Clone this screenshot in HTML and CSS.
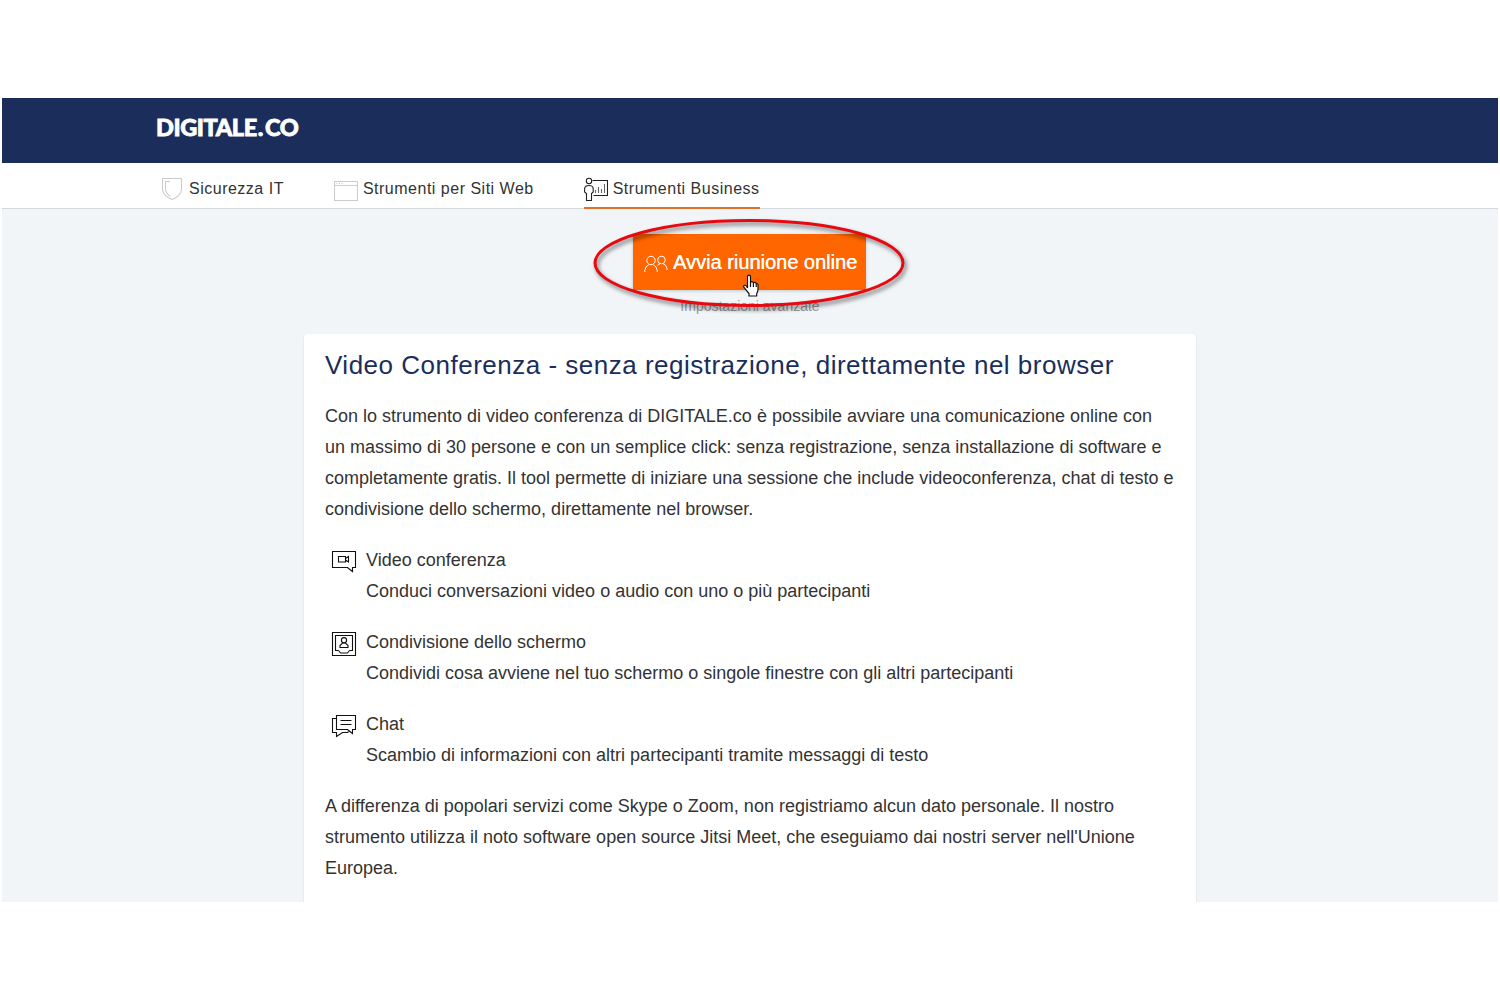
FILE: index.html
```html
<!DOCTYPE html>
<html lang="it">
<head>
<meta charset="utf-8">
<title>Video Conferenza - DIGITALE.CO</title>
<link rel="stylesheet" href="styles.css">
</head>
<body>
<div class="page">
  <header class="topbar"><span class="logo">DIGITALE<span class="dot">.</span>CO</span></header>
  <nav class="nav">
    <a class="tab tab-security">
      <svg class="icon shield" width="22" height="24" viewBox="0 0 22 24"><path d="M.5 1.500h19v10c0 6-4.500 9-9.500 11c-5-2-9.500-5-9.500-11z"/><path d="M8 4.500H3.500v7c0 4 2 6 5 8"/></svg>
      <span>Sicurezza IT</span>
    </a>
    <a class="tab tab-web">
      <svg class="icon window" width="24" height="24" viewBox="0 0 24 24"><path d="M.5 4.500h23v19H.5zM.5 8.500h23M2.500 6.500h1M5 6.500h1M7.500 6.500h1"/></svg>
      <span>Strumenti per Siti Web</span>
    </a>
    <a class="tab tab-business">
      <svg class="icon" width="24" height="25" viewBox="0 0 24 25"><circle cx="5" cy="4" r="2.700"/><path d="M2.500 23.500v-7L.6 15v-3.500Q1 8.500 5 8.500t4.200 3V15l-1.700 1.500v7zM8.500 3.500h15v15H9.500"/><path class="bars" d="M11.500 16v-3M14.500 16v-6M17.500 16v-4M20.500 16V7"/></svg>
      <span>Strumenti Business</span>
    </a>
  </nav>
  <main class="content">
    <div class="launch">
      <button class="start">
        <svg class="icon people" width="24" height="18" viewBox="0 0 24 18"><circle cx="7" cy="5.500" r="4.200"/><circle cx="17.500" cy="5" r="3.800"/><path d="M.8 17v-1.500q.5-4.500 4-5.700M9.200 9.800q3.500 1.200 4 5.700V17M13.500 10.500q1-1.200 2.500-1.800M19.200 8.700q3.500 1.300 3.800 5V15"/></svg>
        <span>Avvia riunione online</span>
      </button>
      <a class="advanced">Impostazioni avanzate</a>
      <svg class="highlight" width="330" height="108" viewBox="0 0 330 108"><ellipse cx="165" cy="53" rx="154" ry="42.500"/></svg>
      <svg class="pointer" width="18" height="24" viewBox="0 0 18 24"><path d="M5.500 14V3q0-1.800 1.500-1.800T8.500 3v6q.2-1.500 1.500-1.300t1.400 1.500q.3-1 1.500-.8t1.300 1.400q1.800-.5 1.800 1.400v4.300q0 2-1.300 4V22H7v-2.500l-5-6q-1-1.800.5-2.200t3 2.700M8.500 9v4M11.400 9v4M14.200 10v3"/></svg>
    </div>
    <article class="card">
      <h1>Video Conferenza - senza registrazione, direttamente nel browser</h1>
      <p>Con lo strumento di video conferenza di DIGITALE.co è possibile avviare una comunicazione online con<br>un massimo di 30 persone e con un semplice click: senza registrazione, senza installazione di software e<br>completamente gratis. Il tool permette di iniziare una sessione che include videoconferenza, chat di testo e<br>condivisione dello schermo, direttamente nel browser.</p>
      <section class="feature">
        <svg class="icon" width="26" height="24" viewBox="0 0 26 24"><path d="M1.500 2.500h23v16h-3v4l-5-4h-15zM7.500 7.500h7v5.500h-7zM14.500 9.500l3-2v5.500l-3-2"/></svg>
        <div><div>Video conferenza</div><div>Conduci conversazioni video o audio con uno o più partecipanti</div></div>
      </section>
      <section class="feature">
        <svg class="icon" width="26" height="26" viewBox="0 0 26 26"><path d="M1.500 1.500h23v23h-23zM7.500 19.500h-3v-15h17v15h-3M7.500 19.500l2 2.500h7l2-2.500M9 16.500v-2l2.500-2.500h3l2.500 2.500v2z"/><circle cx="13" cy="9.200" r="2.600"/></svg>
        <div><div>Condivisione dello schermo</div><div>Condividi cosa avviene nel tuo schermo o singole finestre con gli altri partecipanti</div></div>
      </section>
      <section class="feature">
        <svg class="icon" width="26" height="25" viewBox="0 0 26 25"><path d="M5.500 2.500h19v14h-3v4l-5-4h-11zM5.500 5.500h-4v14h4v4l6-4h5l2-1.500M9.500 7.500h11M9.500 11.500h11"/></svg>
        <div><div>Chat</div><div>Scambio di informazioni con altri partecipanti tramite messaggi di testo</div></div>
      </section>
      <p>A differenza di popolari servizi come Skype o Zoom, non registriamo alcun dato personale. Il nostro<br>strumento utilizza il noto software open source Jitsi Meet, che eseguiamo dai nostri server nell'Unione<br>Europea.</p>
    </article>
  </main>
</div>
</body>
</html>
```
FILE: styles.css
```css
* { box-sizing: border-box; }
body { margin: 0; height: 1000px; background: #fff; font-family: "Liberation Sans", Arial, sans-serif; color: #333; overflow: hidden; }
.page { margin: 98px 2px 0; height: 804px; overflow: hidden; display: flex; flex-direction: column; }
.topbar { height: 65px; flex: none; background: #1b2e5b; padding: 15px 0 0 154px; }
.logo { display: block; color: #fff; font: 900 23.5px/29px Lato, sans-serif; letter-spacing: -.4px; -webkit-text-stroke: .8px #fff; }
.dot { margin: 0 2px 0 1px; }
.nav { height: 46px; flex: none; display: flex; gap: 50px; padding-left: 160px; border-bottom: 1px solid #d5d8dd; }
.tab { display: flex; gap: 5px; height: 46px; padding-top: 14px; font-size: 16px; line-height: 23px; letter-spacing: .5px; white-space: nowrap; }
.tab-business { border-bottom: 2px solid #e3702a; }
.icon { flex: none; fill: none; stroke: #222; stroke-width: 1.1; }
.bars { stroke: #666; }
.shield, .window { stroke: #ccc; }
.content { flex: 1; background: #f2f5f8; }
.launch { position: relative; height: 125px; padding-top: 25px; display: flex; flex-direction: column; align-items: center; }
.start { width: 233px; height: 56px; flex: none; margin-right: 1px; border: 0; background: #f60; color: #fff; display: flex; gap: 5px; padding: 0 0 0 11px; align-items: center; font: 20px "Liberation Sans", Arial, sans-serif; white-space: nowrap; box-shadow: 0 1px 3px #0003; text-shadow: .3px 0 #fff; }
.people { stroke: #fff; stroke-width: 1; margin-top: 3px; }
.advanced { margin-top: 7px; font-size: 14px; line-height: 18px; color: #999; }
.highlight { position: absolute; left: 581.5px; top: 1px; fill: none; stroke: #e60a10; stroke-width: 3; filter: drop-shadow(2px 3px 2px #0008); }
.pointer { position: absolute; left: 740px; top: 65px; fill: #fff; stroke: #111; stroke-width: 1.2; }
.card { width: 892px; height: 640px; margin: 0 auto; padding: 15px 21px; background: #fff; border-radius: 4px; box-shadow: 0 1px 2px #0002; font-size: 18px; line-height: 31px; white-space: nowrap; }
h1 { margin: 0 0 20px; font-size: 26px; line-height: 32px; font-weight: 400; letter-spacing: .5px; color: #1b2e5b; }
.card p { margin: 0 0 20px; }
.feature { display: flex; gap: 9px; padding-left: 6px; margin-bottom: 20px; }
.feature .icon { margin-top: 4px; stroke: #111; }
```
